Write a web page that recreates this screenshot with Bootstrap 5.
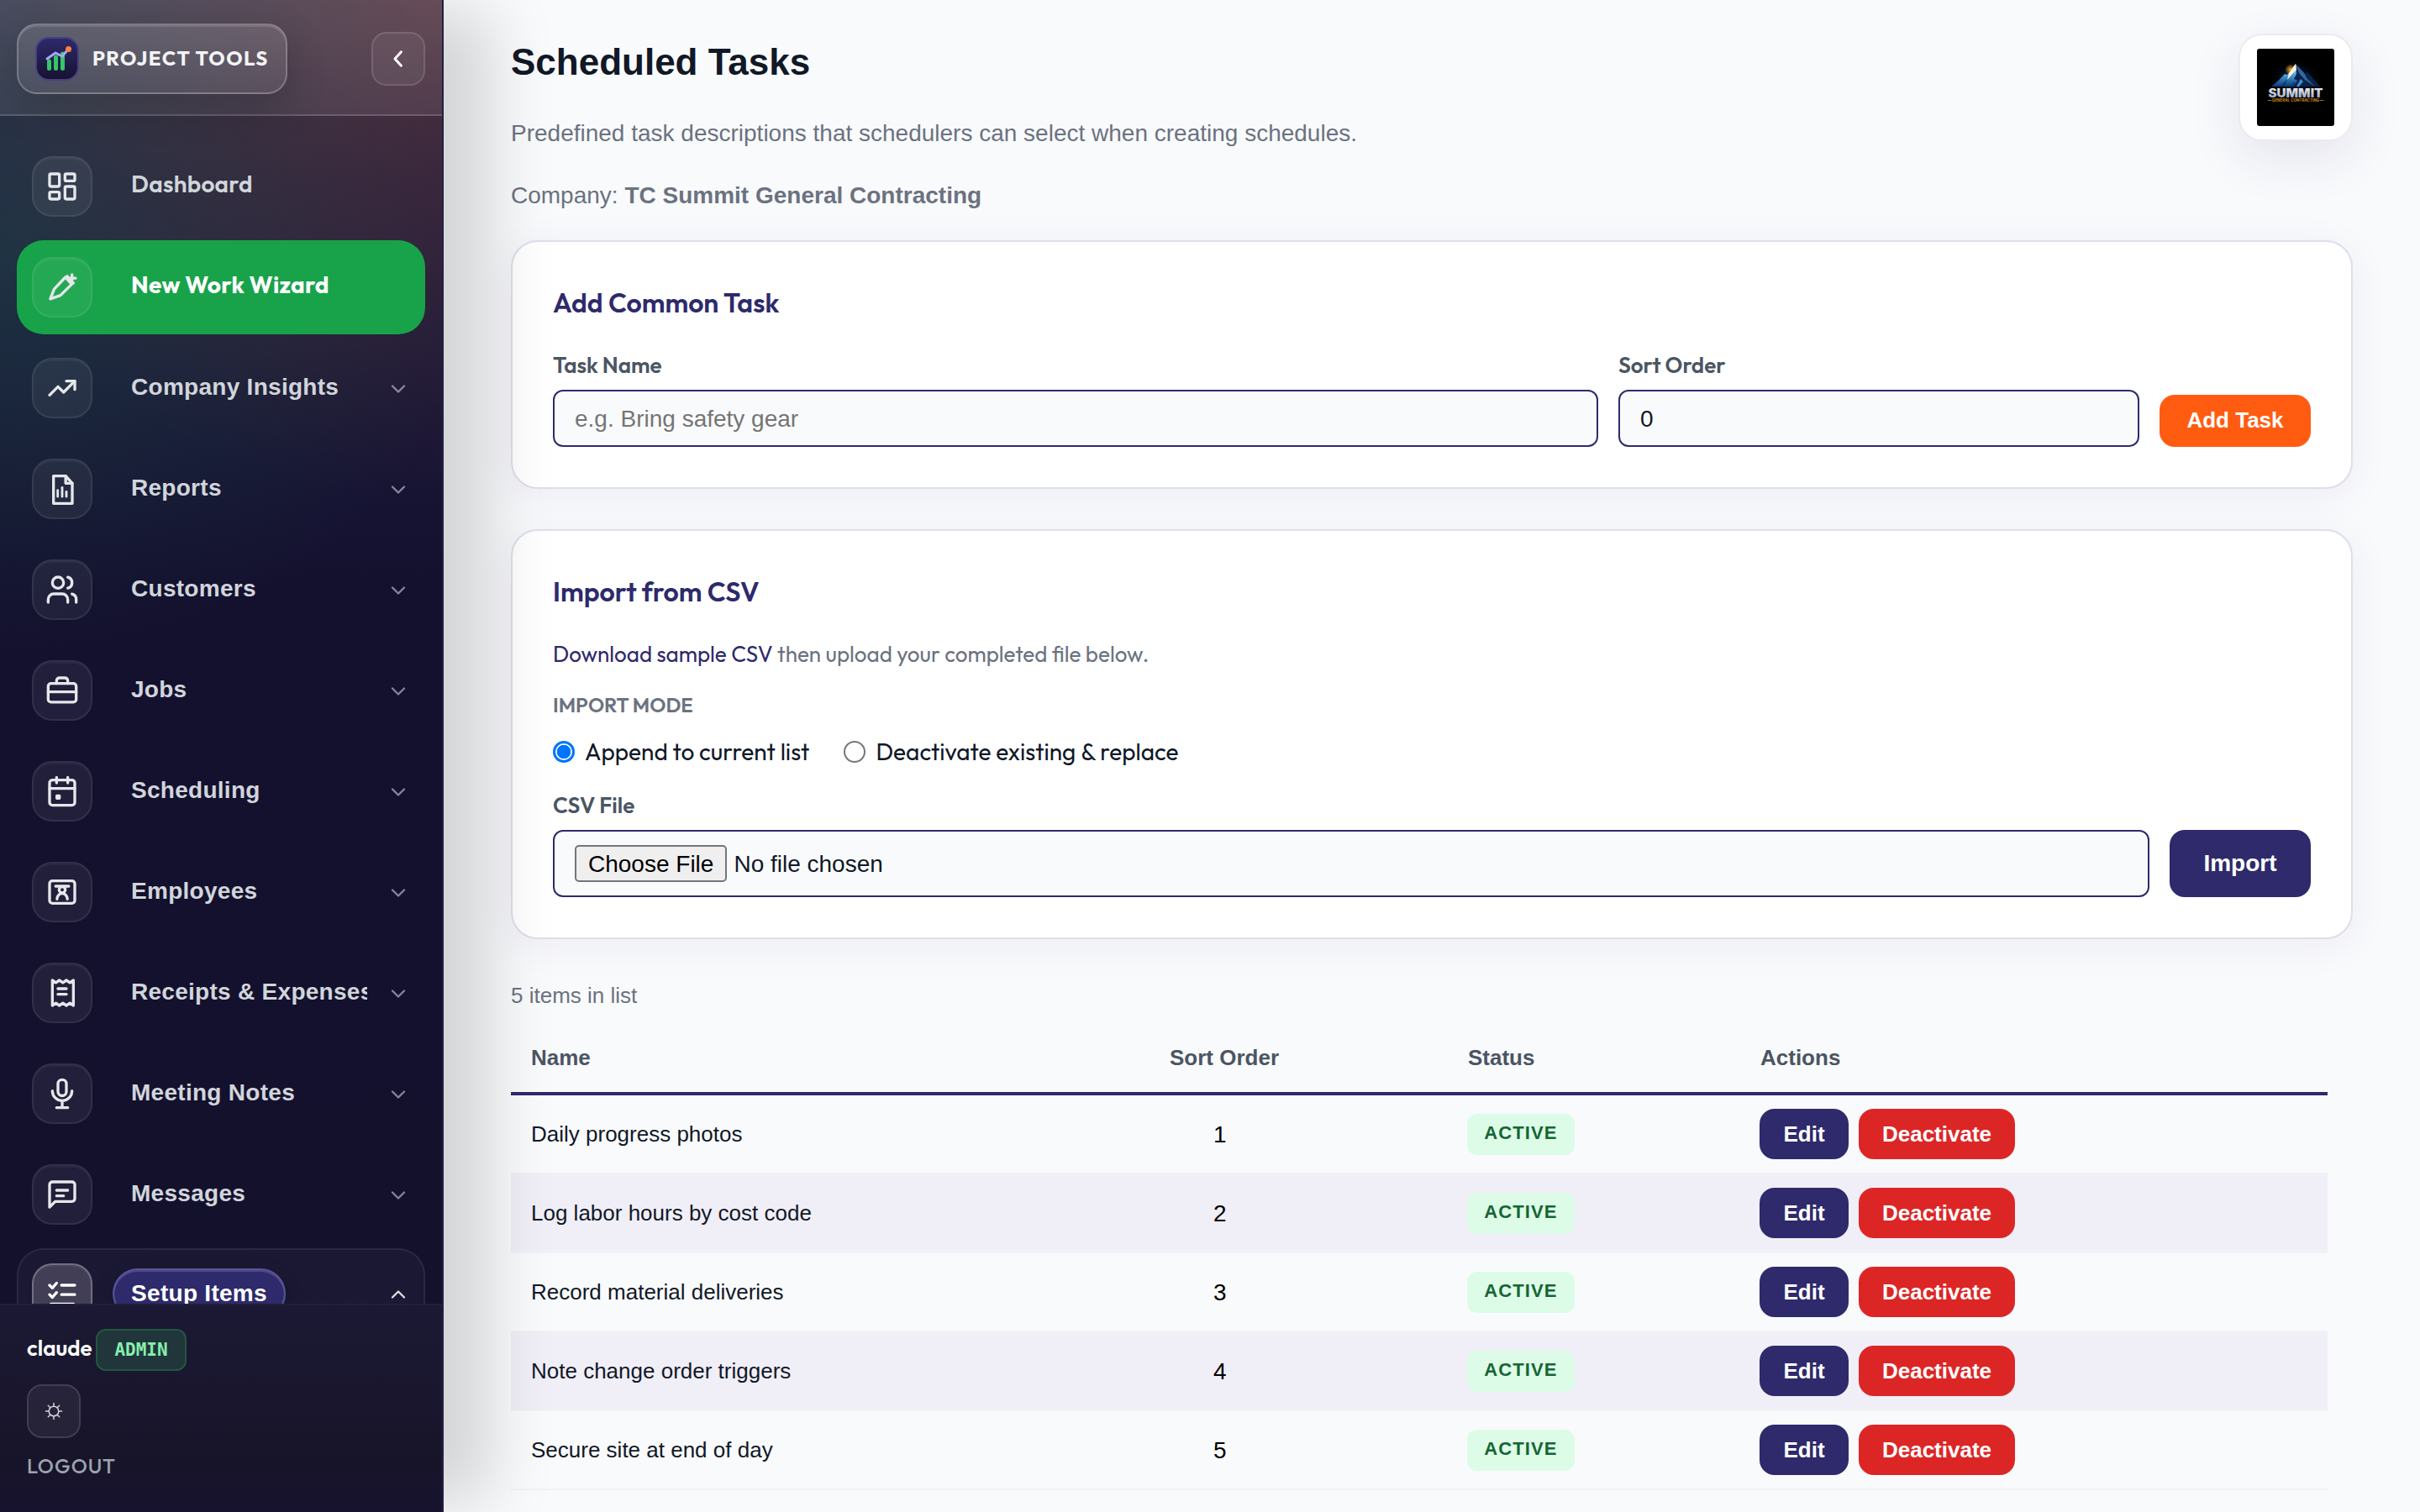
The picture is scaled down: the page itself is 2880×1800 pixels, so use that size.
<!DOCTYPE html>
<html lang="en">
<head>
    <meta charset="UTF-8">
    <meta name="viewport" content="width=device-width, initial-scale=1.0">
    <title>Scheduled Tasks - Project Tools</title>
    <!-- Bootstrap 5 CSS -->
    <link href="https://cdn.jsdelivr.net/npm/bootstrap@5.3.0/dist/css/bootstrap.min.css" rel="stylesheet">
    <style>
        body {
            background-color: #f9fafc;
            color: #111827;
            font-family: "Liberation Sans", Arial, sans-serif;
            font-size: 28px;
            line-height: 1.5;
            height: 1800px;
            overflow: hidden;
        }

        .geo {
            font-family: Outfit, Lato, sans-serif;
        }

        /* Sidebar */
        .side-panel {
            width: 528px;
            height: 1800px;
            border-right: 2px solid #232044;
            background:
                radial-gradient(ellipse 640px 600px at 100% 0, rgba(255, 92, 30, .19), transparent),
                radial-gradient(ellipse 580px 480px at 0 300px, rgba(40, 170, 100, .17), transparent),
                linear-gradient(180deg, #282a48 0, #1e1d40 220px, #14112f 700px, #14112d 1500px, #17132f 1800px);
            box-shadow: 68px 0 72px -12px rgba(0, 0, 0, .15);
            z-index: 2;
        }

        .side-head {
            height: 138px;
            padding: 4px 20px 0;
            border-bottom: 2px solid rgba(255, 255, 255, .12);
            background: linear-gradient(180deg, rgba(255, 255, 255, .12), rgba(255, 255, 255, .08));
        }

        .brand-pill {
            width: 322px;
            height: 84px;
            padding-left: 20px;
            gap: 16px;
            border: 2px solid rgba(255, 255, 255, .22);
            border-radius: 24px;
            background: linear-gradient(180deg, rgba(255, 255, 255, .12), rgba(255, 255, 255, .07));
            box-shadow: 0 16px 48px rgba(0, 0, 0, .2), inset 0 2px 0 rgba(255, 255, 255, .12);
            color: #f3f4f6;
            font-size: 24px;
            font-weight: 700;
            letter-spacing: 1.44px;
            white-space: nowrap;
        }

        .brand-pill span {
            padding-bottom: 2px;
        }

        .brand-mark {
            width: 52px;
            height: 52px;
            flex: none;
        }

        .square-btn {
            width: 64px;
            height: 64px;
            padding: 0;
            border: 2px solid rgba(255, 255, 255, .12);
            border-radius: 18px;
            background: rgba(255, 255, 255, .06);
            color: #fff;
        }

        .side-menu {
            height: 1414px;
            padding: 28px 20px 0;
            gap: 8px;
            overflow: hidden;
        }

        .side-entry {
            height: 112px;
            flex: none;
            padding: 0 18px;
            border-radius: 32px;
            color: #d1d5db;
            font-weight: 700;
            letter-spacing: .28px;
        }

        .side-entry.is-primary {
            background: #18a34a;
            color: #fff;
        }

        .side-entry.is-open {
            height: 300px;
            padding: 16px 16px 0;
            border: 2px solid rgba(255, 255, 255, .07);
            background: rgba(255, 255, 255, .03);
            color: #fff;
        }

        .side-icon {
            width: 72px;
            height: 72px;
            flex: none;
            border: 2px solid rgba(255, 255, 255, .08);
            border-radius: 24px;
            background: rgba(255, 255, 255, .06);
            box-shadow: inset 0 2px 0 rgba(255, 255, 255, .04);
            color: #e5e7eb;
        }

        .is-open .side-icon {
            background: rgba(255, 255, 255, .17);
            border-color: rgba(255, 255, 255, .25);
            color: #fff;
        }

        .side-label {
            width: 281px;
            margin-left: 46px;
            padding-bottom: 3px;
            overflow: hidden;
            white-space: nowrap;
        }

        .side-label.geo {
            padding-bottom: 6px;
        }

        .side-label.is-semi {
            font-weight: 600;
        }

        .open-pill {
            width: 206px;
            height: 60px;
            margin: 6px 0 0 24px;
            border: 2px solid rgba(140, 135, 220, .45);
            border-radius: 30px;
            background: #2e2a6b;
            box-shadow: inset 0 2px 0 rgba(255, 255, 255, .15), 0 8px 24px rgba(0, 0, 0, .2);
            white-space: nowrap;
        }

        svg {
            display: block;
            fill: none;
            stroke: currentColor;
            stroke-width: 2;
            stroke-linecap: round;
            stroke-linejoin: round;
        }

        .side-chevron {
            margin-left: 23px;
            margin-top: 2px;
            flex: none;
            opacity: .6;
        }

        .is-open .side-chevron {
            margin: 23px 0 0 auto;
            opacity: .85;
        }

        .side-foot {
            height: 248px;
            padding: 28px 32px 0;
            border-top: 2px solid rgba(255, 255, 255, .06);
            background: linear-gradient(180deg, rgba(255, 255, 255, .03), rgba(26, 26, 26, .25) 75%, rgba(255, 255, 255, 0));
        }

        .role-badge {
            width: 108px;
            height: 50px;
            border: 2px solid #22573f;
            border-radius: 12px;
            background: #20363b;
            color: #86efac;
            font: 700 21px "DejaVu Sans Mono", monospace;
        }

        .user-name {
            width: 82px;
            color: #fff;
            font-size: 26px;
            font-weight: 600;
            line-height: 45px;
        }

        .logout-link {
            margin-top: 18px;
            color: #9ca3af;
            font-size: 24px;
            font-weight: 500;
            letter-spacing: .96px;
            line-height: 30px;
        }

        /* Content */
        .main-area {
            width: 2352px;
            padding: 40px 80px 0;
        }

        .page-title {
            height: 94px;
            margin: 4px 0 0;
            font-size: 44px;
            font-weight: 700;
            line-height: 59px;
        }

        .sub-text {
            margin: 0;
            color: #6b7280;
            line-height: 42px;
        }

        .company-logo {
            top: 40px;
            right: 80px;
            width: 136px;
            height: 128px;
            border: 2px solid #ebeaf2;
            border-radius: 28px;
            background: #fff;
            box-shadow: 0 20px 60px rgba(46, 42, 107, .1);
        }

        .panel {
            width: 2192px;
            padding: 52px 48px 0;
            border: 2px solid #dedeea;
            border-radius: 32px;
            background: #fff;
            box-shadow: 0 8px 48px rgba(46, 42, 107, .06);
        }

        .add-panel {
            height: 296px;
            margin-top: 32px;
        }

        .import-panel {
            height: 488px;
            margin-top: 48px;
        }

        .panel h2 {
            margin: 0;
            color: #2e2a6b;
            font-size: 32px;
            font-weight: 600;
            line-height: 40px;
        }

        .add-row {
            margin-top: 36px;
        }

        .task-col {
            width: 1244px;
        }

        .order-col {
            width: 620px;
        }

        .field-label {
            display: block;
            margin-bottom: 10px;
            color: #4b5563;
            font-size: 26px;
            font-weight: 600;
            line-height: 38px;
        }

        .field-box {
            display: block;
            width: 100%;
            height: 68px;
            padding: 1px 24px 0;
            border: 2px solid #2e2a6b;
            border-radius: 12px;
            background: #f9fafc;
            color: #111827;
            font-size: 28px;
        }

        .geo .field-box,
        .geo .btn {
            font-family: "Liberation Sans", Arial, sans-serif;
        }

        .field-box::placeholder {
            color: #757575;
            opacity: 1;
        }

        .file-box {
            height: 80px;
            padding-top: 16px;
        }

        .file-box::file-selector-button {
            height: 44px;
            margin: 0 8px 0 0;
            padding: 0 14px;
            border: 2px solid #767676;
            border-radius: 5px;
            background: #efefef;
            color: #000;
        }

        .btn.act {
            height: 60px;
            flex: none;
            padding: 0;
            border: 0;
            border-radius: 18px;
            color: #fff;
            font-size: 26px;
            font-weight: 700;
            line-height: 58px;
        }

        .act-navy { background: #2e2a6b; }
        .act-red { background: #dc2626; }
        .act-orange { background: #ff5c12; }

        .btn.add-btn { width: 180px; height: 62px; padding-bottom: 3px; }
        .btn.import-btn { width: 168px; height: 80px; padding-bottom: 1px; font-size: 28px; line-height: 76px; }
        .edit-btn { width: 106px; }
        .off-btn { width: 186px; }

        .import-hint {
            margin: 35px 0 0;
            color: #6b7280;
            font-size: 26px;
            line-height: 40px;
        }

        .import-hint a {
            color: #2e2a6b;
        }

        .mode-title {
            margin-top: 20px;
            color: #6b7280;
            font-size: 24px;
            font-weight: 600;
            line-height: 40px;
        }

        .mode-row {
            height: 42px;
            margin: 15px 0 24px;
        }

        .mode-row label {
            margin-left: 12px;
            padding-bottom: 1px;
        }

        .mode-first {
            margin-right: 41px;
        }

        .mode-radio {
            appearance: none;
            width: 26px;
            height: 26px;
            margin: 0;
            border: 2px solid #767676;
            border-radius: 50%;
            background: #fff;
        }

        .mode-radio:checked {
            border: 3px solid #0075ff;
            background: radial-gradient(circle, #0075ff 0 8px, #fff 8.5px);
        }

        .list-count {
            margin: 47px 0 15px;
            color: #6b7280;
            font-size: 26px;
            line-height: 40px;
        }

        .task-table {
            width: 2162px;
            table-layout: fixed;
            border-collapse: separate;
            border-spacing: 0;
            font-size: 26px;
        }

        .c-name { width: 760px; }
        .c-order { width: 355px; }
        .c-status { width: 347px; }

        .task-table th {
            height: 84px;
            padding: 0 24px 2px;
            border-bottom: 4px solid #2e2a6b;
            color: #4b5563;
            font-weight: 700;
        }

        .task-table th:last-child {
            padding-left: 25px;
        }

        .task-table td {
            height: 94px;
            padding: 0 24px;
            border-bottom: 2px solid #f1f2f6;
            vertical-align: middle;
        }

        .task-table tr:nth-child(even) td {
            background: #f0eef7;
        }

        .task-table .order-cell {
            padding: 1px 0 0 76px;
            color: #000;
            font-size: 28px;
        }

        .status-tag {
            width: 128px;
            height: 49px;
            margin-left: -1px;
            border-radius: 12px;
            background: #dcfce7;
            color: #166534;
            font-size: 22px;
            font-weight: 700;
            letter-spacing: 1.1px;
            line-height: 46px;
            text-align: center;
        }

        .action-gap {
            gap: 12px;
        }
    </style>
</head>
<body>
    <div class="d-flex">
        <!-- Sidebar -->
        <aside class="side-panel position-relative flex-shrink-0">
            <div class="side-head d-flex align-items-center justify-content-between">
                <div class="brand-pill geo d-flex align-items-center">
                    <svg class="brand-mark" viewBox="0 0 52 52">
                        <defs>
                            <linearGradient id="markFill" x1="0" y1="0" x2="0" y2="1">
                                <stop offset="0" stop-color="#2e2a6b"/>
                                <stop offset="1" stop-color="#17122f"/>
                            </linearGradient>
                        </defs>
                        <rect x="1" y="1" width="50" height="50" rx="15" fill="url(#markFill)" stroke="#474087"/>
                        <path d="M16.500 29v8.500M24.500 24v13.500M32.500 20v17.500" stroke="#34c768" stroke-width="5"/>
                        <path d="M14 26l10-7 8 4 6-7" stroke="#a5a8f8" stroke-width="3"/>
                        <circle cx="39.5" cy="14.5" r="3.5" fill="#ff8142" stroke="none"/>
                    </svg>
                    <span>PROJECT TOOLS</span>
                </div>
                <button class="square-btn d-flex align-items-center justify-content-center" type="button">
                    <svg width="36" height="36" viewBox="0 0 24 24"><path d="M14.300 6.500l-5 5.500 5 5.500"/></svg>
                </button>
            </div>

            <nav class="side-menu d-flex flex-column" id="sideMenu">
                <!-- Menu entries are added by the script -->
            </nav>

            <div class="side-foot">
                <div class="d-flex">
                    <div class="user-name geo">claude</div>
                    <div class="role-badge d-flex align-items-center justify-content-center">ADMIN</div>
                </div>
                <button class="square-btn d-flex align-items-center justify-content-center mt-3" type="button">
                    <svg width="24" height="24" viewBox="0 0 24 24" opacity=".8">
                        <g stroke-width="1.5">
                            <circle cx="12" cy="12" r="5.8"/>
                            <path d="M12 2.500v3M12 18.500v3M2.500 12h3M18.500 12h3M5.300 5.300l2 2M16.700 16.700l2 2M5.300 18.700l2-2M16.700 7.300l2-2"/>
                        </g>
                    </svg>
                </button>
                <div class="logout-link geo">LOGOUT</div>
            </div>
        </aside>

        <!-- Content -->
        <main class="main-area position-relative">
            <h1 class="page-title">Scheduled Tasks</h1>
            <p class="sub-text">Predefined task descriptions that schedulers can select when creating schedules.</p>
            <p class="sub-text mt-4 pt-2">Company: <strong>TC Summit General Contracting</strong></p>

            <div class="company-logo position-absolute d-flex align-items-center justify-content-center">
                <svg width="92" height="92" viewBox="0 0 92 92">
                    <defs>
                        <radialGradient id="glow">
                            <stop offset="0" stop-color="#0b4a9c"/>
                            <stop offset="1" stop-color="#000" stop-opacity="0"/>
                        </radialGradient>
                        <radialGradient id="sun">
                            <stop offset="0" stop-color="#ffb52e"/>
                            <stop offset="1" stop-color="#ff9a00" stop-opacity="0"/>
                        </radialGradient>
                        <linearGradient id="rock" x1="0" y1="0" x2="0" y2="1">
                            <stop offset="0" stop-color="#e9f4fb"/>
                            <stop offset=".5" stop-color="#4a9fd8"/>
                            <stop offset="1" stop-color="#0a3a75"/>
                        </linearGradient>
                        <linearGradient id="steel" x1="0" y1="0" x2="0" y2="1">
                            <stop offset="0" stop-color="#fff"/>
                            <stop offset="1" stop-color="#8f9dba"/>
                        </linearGradient>
                    </defs>
                    <rect width="92" height="92" rx="3" fill="#000" stroke="none"/>
                    <ellipse cx="46" cy="36" rx="32" ry="25" fill="url(#glow)" stroke="none" opacity=".7"/>
                    <circle cx="40" cy="25" r="7" fill="url(#sun)" stroke="none"/>
                    <g stroke="none">
                        <path d="M17 45l16-15 3 1 10-13 11 12 3-2 15 17z" fill="#0a2450"/>
                        <path d="M17 45l8-6 8-9 3 1 10-13 1 12-3 6 4 2-5 7z" fill="url(#rock)"/>
                        <path d="M46 18l11 12 2 5 10 10-12-8-7-8z" fill="#35689c"/>
                        <path d="M38 29l8-11 1 7-5 5-6 7z" fill="#fff2d6"/>
                        <path d="M28 45l8-9-3 9zM40 45l5-7-1 7z" fill="#0b3a75"/>
                        <path d="M47 45l5-9 3 3-5 6z" fill="#3f8dc9"/>
                    </g>
                    <text x="46" y="57.5" text-anchor="middle" textLength="65" lengthAdjust="spacingAndGlyphs" font-family="Inter, sans-serif" font-size="14" font-weight="900" fill="url(#steel)" stroke="none">SUMMIT</text>
                    <text x="46" y="63" text-anchor="middle" textLength="56" lengthAdjust="spacingAndGlyphs" font-family="Inter, sans-serif" font-size="4.5" font-weight="700" fill="#c98a1b" stroke="none">GENERAL CONTRACTING</text>
                    <path d="M13 61.500h4M75 61.500h4" stroke="#c98a1b" stroke-width=".8"/>
                </svg>
            </div>

            <!-- Add Common Task -->
            <section class="panel add-panel geo">
                <h2>Add Common Task</h2>
                <div class="add-row d-flex align-items-end gap-4">
                    <div class="task-col">
                        <label class="field-label" for="taskName">Task Name</label>
                        <input class="field-box" id="taskName" type="text" placeholder="e.g. Bring safety gear">
                    </div>
                    <div class="order-col">
                        <label class="field-label" for="sortOrder">Sort Order</label>
                        <input class="field-box" id="sortOrder" type="text" value="0">
                    </div>
                    <button class="btn act act-orange add-btn" type="button">Add Task</button>
                </div>
            </section>

            <!-- Import from CSV -->
            <section class="panel import-panel geo">
                <h2>Import from CSV</h2>
                <p class="import-hint"><a href="#" class="text-decoration-none">Download sample CSV</a> then upload your completed file below.</p>
                <div class="mode-title">IMPORT MODE</div>
                <div class="mode-row d-flex align-items-center">
                    <input class="mode-radio" type="radio" name="mode" id="modeAppend" checked>
                    <label for="modeAppend" class="mode-first">Append to current list</label>
                    <input class="mode-radio" type="radio" name="mode" id="modeReplace">
                    <label for="modeReplace">Deactivate existing &amp; replace</label>
                </div>
                <label class="field-label" for="csvFile">CSV File</label>
                <div class="d-flex gap-4">
                    <input class="field-box file-box" id="csvFile" type="file">
                    <button class="btn act act-navy import-btn" type="button">Import</button>
                </div>
            </section>

            <p class="list-count">5 items in list</p>
            <table class="task-table">
                <colgroup><col class="c-name"><col class="c-order"><col class="c-status"><col></colgroup>
                <thead>
                    <tr><th>Name</th><th>Sort Order</th><th>Status</th><th>Actions</th></tr>
                </thead>
                <tbody id="taskRows"></tbody>
            </table>
        </main>
    </div>

    <!-- Bootstrap 5 JavaScript Bundle with Popper -->
    <script src="https://cdn.jsdelivr.net/npm/bootstrap@5.3.0/dist/js/bootstrap.bundle.min.js"></script>

    <script>
        // Sidebar entries, icons on a 24 unit grid
        const menu = [
            { label: 'Dashboard', font: ' geo is-semi', icon: '<rect x="3" y="3" width="7" height="9" rx="1"/><rect x="14" y="3" width="7" height="5" rx="1"/><rect x="14" y="12" width="7" height="9" rx="1"/><rect x="3" y="16" width="7" height="5" rx="1"/>' },
            { label: 'New Work Wizard', font: ' geo', primary: true, icon: '<path d="M3.500 20.300L6.300 13.300 14.300 4.800l4.500 5-8 8z"/><path d="M15.500 4l4.500 5M19 3v4.500M17 5.500h4.500"/>' },
            { label: 'Company Insights', icon: '<path d="M3 17l6-6 4 4 8-8"/><path d="M15 7h6v6"/>' },
            { label: 'Reports', icon: '<path d="M14.500 2.800H5.800v19.600h13.400V8z"/><path d="M14.500 2.800V8h4.700"/><path d="M8.800 17.500v-4.500M12 17.500v-6.500M15 17.500v-3.500" stroke-width="1.700"/>' },
            { label: 'Customers', icon: '<path d="M16 21v-2a4 4 0 0 0-4-4H6a4 4 0 0 0-4 4v2"/><circle cx="9" cy="7" r="4"/><path d="M22 21v-2a4 4 0 0 0-3-3.870M16 3.130a4 4 0 0 1 0 7.750"/>' },
            { label: 'Jobs', icon: '<rect x="2" y="7" width="20" height="13.300" rx="2"/><path d="M16 7V5a2 2 0 0 0-2-2h-4a2 2 0 0 0-2 2v2M2 13h20"/>' },
            { label: 'Scheduling', icon: '<rect x="3" y="4" width="18" height="18" rx="2"/><path d="M16 2v4M8 2v4M3 10h18M8.200 15.200h1.800v1.800h-1.800z"/>' },
            { label: 'Employees', icon: '<rect x="3" y="4" width="18" height="16" rx="2"/><circle cx="12" cy="10.300" r="2.200"/><path d="M8.300 17a3.700 4 0 0 1 7.400 0M7.300 7.800h9.400"/>' },
            { label: 'Receipts & Expenses', icon: '<path d="M5 3v18l2.500-1.700 2.500 1.700 2.500-1.700 2.500 1.700 2.500-1.700 2.500 1.700V3l-2.500 1.700-2.500-1.700-2.500 1.700-2.500-1.700-2.500 1.700z"/><path d="M9 9h6M9 13h6"/>' },
            { label: 'Meeting Notes', icon: '<rect x="9" y="2" width="6" height="11.500" rx="3"/><path d="M19 10a7 7 0 0 1-14 0M12 17v5M8 22h8"/>' },
            { label: 'Messages', icon: '<path d="M21 15a2 2 0 0 1-2 2H7l-4 4V5a2 2 0 0 1 2-2h14a2 2 0 0 1 2 2z"/><path d="M8 9h8M8 13h5"/>' }
        ];

        const iconBox = icon => `<div class="side-icon d-flex align-items-center justify-content-center"><svg width="40" height="40" viewBox="0 0 24 24">${icon}</svg></div>`;
        const chevron = d => `<svg class="side-chevron" width="28" height="28" viewBox="0 0 24 24"><path d="${d}"/></svg>`;

        document.getElementById('sideMenu').innerHTML = menu.map(m => `
            <div class="side-entry d-flex align-items-center${m.primary ? ' is-primary' : ''}">
                ${iconBox(m.icon)}
                <div class="side-label${m.font || ''}">${m.label.replace('&', '&amp;')}</div>
                ${m.font ? '' : chevron('M6 9l6 6 6-6')}
            </div>`).join('') + `
            <div class="side-entry is-open d-flex">
                ${iconBox('<path d="M3 6l2 2 3-3.500M3 12.700l2 2 3-3.500M11.500 6h9.500M11.500 12.700h9.500M4 19.500h16"/>')}
                <div class="open-pill d-flex align-items-center justify-content-center">Setup Items</div>
                ${chevron('M6 15l6-6 6 6')}
            </div>`;

        // Table rows
        const tasks = ['Daily progress photos', 'Log labor hours by cost code', 'Record material deliveries', 'Note change order triggers', 'Secure site at end of day'];

        document.getElementById('taskRows').innerHTML = tasks.map((name, i) => `
            <tr>
                <td>${name}</td>
                <td class="order-cell">${i + 1}</td>
                <td><div class="status-tag">ACTIVE</div></td>
                <td>
                    <div class="action-gap d-flex">
                        <button class="btn act act-navy edit-btn" type="button">Edit</button>
                        <button class="btn act act-red off-btn" type="button">Deactivate</button>
                    </div>
                </td>
            </tr>`).join('');
    </script>
</body>
</html>
